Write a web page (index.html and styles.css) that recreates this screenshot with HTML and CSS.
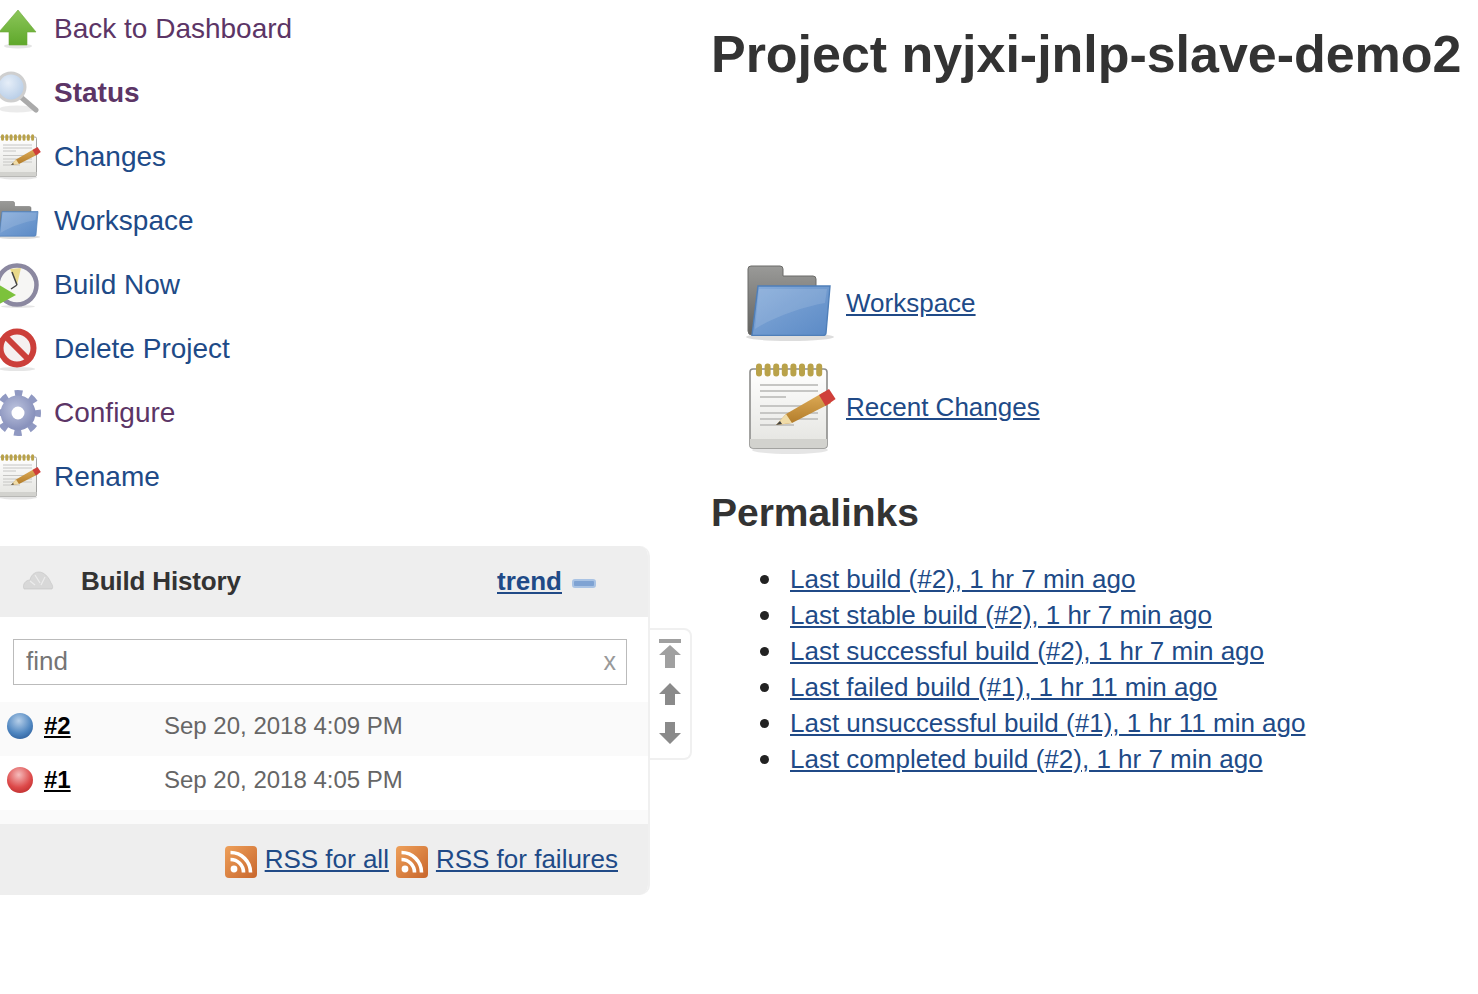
FILE: index.html
```html
<!DOCTYPE html>
<html lang="en">
<head>
<meta charset="utf-8">
<title>Project nyjxi-jnlp-slave-demo2</title>
<link rel="stylesheet" href="styles.css">
</head>
<body>
<svg class="defs" width="0" height="0" aria-hidden="true">
  <defs>
    <linearGradient id="gGreen" x1="0" y1="0" x2="0" y2="1"><stop offset="0" stop-color="#8cc65a"/><stop offset="1" stop-color="#5fa82b"/></linearGradient>
    <linearGradient id="gFolder" x1="0" y1="0" x2="1" y2="1"><stop offset="0" stop-color="#86abd9"/><stop offset="1" stop-color="#5b8ac6"/></linearGradient>
    <linearGradient id="gBack" x1="0" y1="0" x2="0" y2="1"><stop offset="0" stop-color="#9a9a98"/><stop offset="1" stop-color="#62625f"/></linearGradient>
    <linearGradient id="gPaper" x1="0" y1="0" x2="0" y2="1"><stop offset="0" stop-color="#fff"/><stop offset="1" stop-color="#e4e4e0"/></linearGradient>
    <linearGradient id="gPencil" x1="0" y1="0" x2="0" y2="1"><stop offset="0" stop-color="#e0ad58"/><stop offset="1" stop-color="#b07a28"/></linearGradient>
    <radialGradient id="gGlass" cx=".4" cy=".35" r=".7"><stop offset="0" stop-color="#e6eef8"/><stop offset="1" stop-color="#b4cbe6"/></radialGradient>
    <radialGradient id="gGear" cx=".4" cy=".35" r=".8"><stop offset="0" stop-color="#bcc3de"/><stop offset="1" stop-color="#8a93bd"/></radialGradient>
    <linearGradient id="gRss" x1="0" y1="0" x2="1" y2="1"><stop offset="0" stop-color="#eea05a"/><stop offset="1" stop-color="#c8662c"/></linearGradient>
    <symbol id="i-up" viewBox="0 0 48 48">
      <ellipse cx="24" cy="42" rx="14" ry="2.5" fill="#ccc" opacity=".5"/>
      <path d="M24 6 42 28H33V41H15V28H5Z" fill="url(#gGreen)" stroke="#6da838" stroke-width=".6"/>
    </symbol>
    <symbol id="i-search" viewBox="0 0 48 48">
      <ellipse cx="23" cy="41" rx="18" ry="3.5" fill="#ddd" opacity=".6"/>
      <path d="M28 30 42 42" stroke="#aaa" stroke-width="5" stroke-linecap="round"/>
      <circle cx="17" cy="19" r="14" fill="url(#gGlass)" stroke="#cfcfcf" stroke-width="3"/>
    </symbol>
    <symbol id="i-note" viewBox="0 0 48 48">
      <ellipse cx="24" cy="45.5" rx="19" ry="2" fill="#ccc" opacity=".5"/>
      <rect x="4" y="5" width="38.500" height="39.500" rx="1.500" fill="url(#gPaper)" stroke="#8d8d8b" stroke-width=".8"/>
      <path d="M4 40h38.500v3a1.500 1.500 0 0 1-1.500 1.500H5.500A1.500 1.500 0 0 1 4 43Z" fill="#d2d2ce"/>
      <path d="M9 13H38M9 16H38M9 19H22M9 23.500H38M9 27H38M9 30H38M9 33H26" stroke="#c6c6c4" stroke-width="1"/>
      <path d="M8.500 3.800V7.200M12.800 3.800V7.200M17.100 3.800V7.200M21.400 3.800V7.200M25.700 3.800V7.200M30 3.800V7.200M34.300 3.800V7.200M38.600 3.800V7.200" stroke="#b9a24a" stroke-width="3" stroke-linecap="round"/>
      <path d="M17 33 22 27.500 41 16.500 44.500 22 25 32Z" fill="url(#gPencil)"/>
      <path d="M17 33 22 27.500 25 32Z" fill="#f0dca8"/>
      <path d="M17 33 19 31 20 32.500Z" fill="#444"/>
      <path d="M38.500 18 43.500 15 46.800 20 41.800 23.500Z" fill="#cf3f3a"/>
    </symbol>
    <symbol id="i-folder" viewBox="0 0 48 48">
      <ellipse cx="24" cy="41" rx="22" ry="2" fill="#bbb" opacity=".5"/>
      <path d="M3 7a1.500 1.500 0 0 1 1.500-1.500H19A1.500 1.500 0 0 1 20.500 7v3.500H35.500A1.500 1.500 0 0 1 37 12V20L6 40H5A2 2 0 0 1 3 38Z" fill="url(#gBack)" stroke="#6b6b68" stroke-width=".5"/>
      <path d="M8 15.500H44L42 39A1.500 1.500 0 0 1 40.500 40.200H5Z" fill="url(#gFolder)" stroke="#4f7fb9" stroke-width=".7"/>
      <path d="M8.500 17H42.500L41.500 24C30 26 16 31 6.500 37Z" fill="#fff" opacity=".12"/>
    </symbol>
    <symbol id="i-clock" viewBox="0 0 48 48">
      <ellipse cx="24" cy="46.500" rx="17" ry="1.500" fill="#ccc" opacity=".5"/>
      <circle cx="23" cy="25" r="19.500" fill="#f6f6f4" stroke="#8b88a0" stroke-width="4.500"/>
      <path d="M23 25 16 9 27 8Z" fill="#e9d98a"/>
      <path d="M23 25 18 12M23 25 17 29" stroke="#444" stroke-width="1.500"/>
      <path d="M0 22 22 35 0 47Z" fill="#7cc23c"/>
    </symbol>
    <symbol id="i-delete" viewBox="0 0 48 48">
      <ellipse cx="23" cy="45" rx="18" ry="2" fill="#ccc" opacity=".5"/>
      <circle cx="23" cy="24" r="16.500" fill="#f5f0f0" stroke="#cc3f3a" stroke-width="6"/>
      <path d="M11 12 35 36" stroke="#cc3f3a" stroke-width="6"/>
    </symbol>
    <symbol id="i-gear" viewBox="0 0 48 48">
      <circle cx="24" cy="25" r="19.500" fill="none" stroke="#9099c2" stroke-width="7" stroke-dasharray="7.500 7.810" stroke-dashoffset="3.750"/>
      <circle cx="24" cy="25" r="12" fill="none" stroke="url(#gGear)" stroke-width="11"/>
    </symbol>
    <symbol id="i-cloud" viewBox="0 0 32 24">
      <path d="M2 21C0 16 4 12 8 12 9 6 15 2 21 5 25 7 28 12 29 15 31 17 31 20 30 21Z" fill="#d8d8d8" stroke="#c4c4c4" stroke-width=".6"/>
      <path d="M8 13 13 17M13 7 18 15M23 9 19 17" stroke="#ececec" stroke-width="1.200" fill="none"/>
    </symbol>
    <symbol id="i-rss" viewBox="0 0 32 32">
      <rect width="32" height="32" rx="4" fill="url(#gRss)"/>
      <circle cx="9" cy="23" r="3.400" fill="#fff"/>
      <path d="M5.500 13.500A13 13 0 0 1 18.500 26.500M5.500 6.500A20 20 0 0 1 25.500 26.500" fill="none" stroke="#fff" stroke-width="3.600"/>
    </symbol>
    <symbol id="i-arrow" viewBox="0 0 24 24">
      <path d="M12 1 23 12H17V23H7V12H1Z" fill="#8a8a8a"/>
    </symbol>
  </defs>
</svg>

<div class="page">
  <aside class="sidebar">
    <nav class="tasks">
      <a class="task visited"><svg class="task-icon"><use href="#i-up"/></svg><span class="task-label">Back to Dashboard</span></a>
      <a class="task visited current"><svg class="task-icon"><use href="#i-search"/></svg><span class="task-label">Status</span></a>
      <a class="task"><svg class="task-icon"><use href="#i-note"/></svg><span class="task-label">Changes</span></a>
      <a class="task"><svg class="task-icon"><use href="#i-folder"/></svg><span class="task-label">Workspace</span></a>
      <a class="task"><svg class="task-icon"><use href="#i-clock"/></svg><span class="task-label">Build Now</span></a>
      <a class="task"><svg class="task-icon"><use href="#i-delete"/></svg><span class="task-label">Delete Project</span></a>
      <a class="task visited"><svg class="task-icon"><use href="#i-gear"/></svg><span class="task-label">Configure</span></a>
      <a class="task"><svg class="task-icon"><use href="#i-note"/></svg><span class="task-label">Rename</span></a>
    </nav>

    <div class="history-wrap">
      <section class="history">
        <header class="history-head">
          <svg class="cloud"><use href="#i-cloud"/></svg>
          <span class="history-title">Build History</span>
          <a class="trend" href="#">trend</a>
          <span class="collapse"></span>
        </header>
        <div class="find-wrap">
          <div class="find"><span>find</span><span class="find-x">x</span></div>
        </div>
        <div class="build shaded">
          <span class="ball blue"></span><a class="build-no" href="#">#2</a><span class="build-date">Sep 20, 2018 4:09 PM</span>
        </div>
        <div class="build">
          <span class="ball red"></span><a class="build-no" href="#">#1</a><span class="build-date">Sep 20, 2018 4:05 PM</span>
        </div>
        <div class="history-spacer"></div>
        <footer class="history-foot">
          <svg class="rss"><use href="#i-rss"/></svg><a href="#">RSS for all</a>
          <svg class="rss"><use href="#i-rss"/></svg><a href="#">RSS for failures</a>
        </footer>
      </section>
      <div class="pager">
        <svg class="pager-top" viewBox="0 0 24 30"><rect x="1" y="0" width="22" height="4" fill="#a0a0a0"/><path d="M12 6 23 16H17V29H7V16H1Z" fill="#a0a0a0"/></svg>
        <svg class="pager-arrow"><use href="#i-arrow"/></svg>
        <svg class="pager-arrow down"><use href="#i-arrow"/></svg>
      </div>
    </div>
  </aside>

  <main class="main">
    <h1 class="title">Project nyjxi-jnlp-slave-demo2</h1>
    <div class="links">
      <div class="big-link"><svg class="big-icon"><use href="#i-folder"/></svg><a href="#">Workspace</a></div>
      <div class="big-link"><svg class="big-icon"><use href="#i-note"/></svg><a href="#">Recent Changes</a></div>
    </div>
    <h2 class="sub">Permalinks</h2>
    <ul class="perma">
      <li><a href="#">Last build (#2), 1 hr 7 min ago</a></li>
      <li><a href="#">Last stable build (#2), 1 hr 7 min ago</a></li>
      <li><a href="#">Last successful build (#2), 1 hr 7 min ago</a></li>
      <li><a href="#">Last failed build (#1), 1 hr 11 min ago</a></li>
      <li><a href="#">Last unsuccessful build (#1), 1 hr 11 min ago</a></li>
      <li><a href="#">Last completed build (#2), 1 hr 7 min ago</a></li>
    </ul>
  </main>
</div>
</body>
</html>
```

FILE: styles.css
```css
* { box-sizing: border-box; }
html, body { margin: 0; padding: 0; background: #fff; overflow: hidden; }
body { font-family: "Liberation Sans", Arial, sans-serif; font-size: 26px; color: #333; height: 994px; }
a { color: #204a87; }
.defs { position: absolute; }

.page { display: flex; align-items: flex-start; }
.sidebar { width: 692px; flex: none; }
.tasks { display: flex; flex-direction: column; margin-top: -4px; }
.task { display: flex; align-items: center; height: 64px; font-size: 28px; color: #204a87; text-decoration: none; }
.task.visited { color: #5c3566; }
.task.current { font-weight: 700; }
.task-icon { width: 48px; height: 48px; margin-left: -6px; margin-right: 12px; flex: none; filter: blur(.5px); }
.task-label { padding-top: 2px; }

.history-wrap { display: flex; align-items: flex-start; margin-top: 38px; }
.history { width: 650px; flex: none; border-right: 2px solid #f0f0f0; border-radius: 0 10px 10px 0; overflow: hidden; }
.history-head { display: flex; align-items: center; height: 71px; background: #eee; font-weight: 700; padding-left: 22px; }
.cloud { width: 32px; height: 24px; margin-right: 27px; margin-top: -4px; filter: blur(.4px); }
.history-title { flex: 1; color: #333; letter-spacing: -.15px; }
.collapse { width: 24px; height: 9px; margin: 4px 52px 0 10px; background: #7fa3d3; border: 2px solid #a9c3e4; border-radius: 3px; }

.find-wrap { padding: 22px 21px 17px 13px; }
.find { display: flex; justify-content: space-between; align-items: center; height: 46px; border: 1px solid #bbb; padding: 0 10px 2px 12px; color: #757575; }
.find-x { color: #999; font-size: 25px; padding-top: 1px; }

.build { display: flex; align-items: center; height: 54px; font-size: 24px; padding-bottom: 6px; }
.build.shaded { background: #fafafa; }
.ball { width: 26px; height: 26px; border-radius: 50%; margin: 0 11px 0 7px; flex: none; }
.ball.blue { background: radial-gradient(circle at 45% 30%, #b6cfe9, #4f86c0 55%, #1f4e8c); }
.ball.red { background: radial-gradient(circle at 45% 30%, #f5bcbc, #dd4a4a 55%, #b02020); }
.build-no { width: 120px; color: #000; font-weight: 700; }
.build-date { color: #666; }

.history-spacer { height: 14px; background: #fafafa; }
.history-foot { display: flex; align-items: center; justify-content: flex-end; height: 71px; background: #eee; padding: 0 30px 0 0; }
.rss { width: 32px; height: 32px; margin: 4px 8px 0 7px; flex: none; filter: blur(.3px); }

.pager { display: flex; flex-direction: column; align-items: center; width: 42px; height: 132px; margin-top: 82px; border: 2px solid #f0f0f0; border-left: 0; border-radius: 0 8px 8px 0; padding-top: 9px; }
.pager-top { width: 24px; height: 30px; flex: none; filter: blur(.5px); }
.pager-arrow { width: 24px; height: 24px; margin-top: 13px; flex: none; filter: blur(.5px); }
.pager-arrow.down { margin-top: 15px; transform: scaleY(-1); }

.main { flex: 1; padding-left: 19px; }
.title { margin: 24px 0 0; font-size: 52px; line-height: 60px; font-weight: 700; color: #333; white-space: nowrap; letter-spacing: -.03px; }
.links { display: flex; flex-direction: column; gap: 8px; margin-top: 171px; padding-left: 31px; }
.big-link { display: flex; align-items: center; height: 96px; gap: 8px; }
.big-icon { width: 96px; height: 96px; flex: none; filter: blur(.6px); }
.sub { margin: 35px 0 0; font-size: 39px; line-height: 46px; font-weight: 700; color: #333; letter-spacing: -.03px; }
.perma { margin: 25px 0 0; padding: 0 0 0 79px; list-style: none; }
.perma li { display: flex; align-items: center; height: 36px; line-height: 36px; }
.perma li::before { content: ""; width: 9px; height: 9px; border-radius: 50%; background: #222; margin-left: -30px; margin-right: 21px; flex: none; }
```
